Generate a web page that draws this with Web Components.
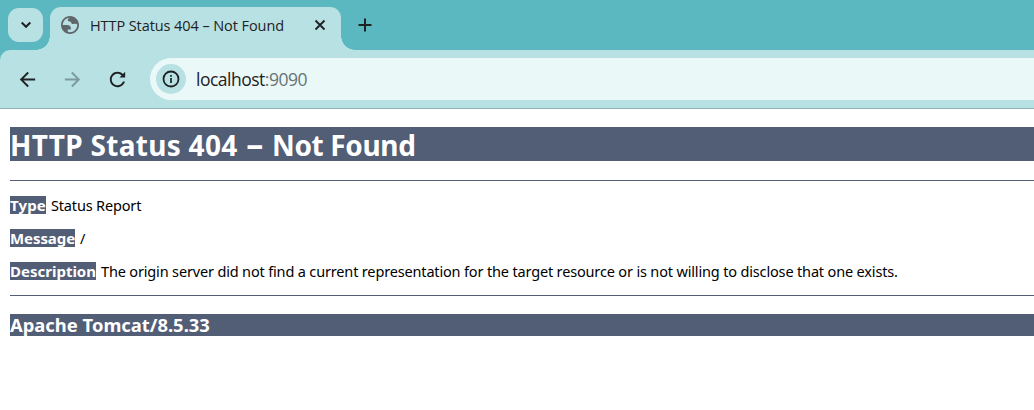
<!DOCTYPE html>
<html lang="en">
<head>
<meta charset="utf-8">
<title>HTTP Status 404 – Not Found</title>
<style>
body{margin:0;background:#fff;overflow:hidden}
</style>
</head>
<body>
<browser-window></browser-window>
<script>
const define = (name, html) => {
  const t = document.createElement('template');
  t.innerHTML = html;
  customElements.define(name, class extends HTMLElement {
    constructor() {
      super();
      this.attachShadow({mode: 'open'}).append(t.content.cloneNode(true));
    }
  });
};

define('tab-strip', `
<style>
:host{display:flex;height:50px;padding-left:8px;box-sizing:border-box;background:#5bb8c1;font-family:"Open Sans","Noto Sans",sans-serif;color:#1f2223}
svg{display:block;flex:none}
.menu{width:35px;height:34px;margin-top:8px;border-radius:11px;background:#b8e1e4;display:grid;place-items:center}
.tab{position:relative;display:flex;align-items:center;box-sizing:border-box;width:291px;height:43px;margin:7px 0 0 7px;padding:0 15px 7px 11px;border-radius:11px 11px 0 0;background:#b8e1e4}
.tab::before,.tab::after{content:"";position:absolute;bottom:0;width:14px;height:14px}
.tab::before{left:-14px;background:radial-gradient(circle at 0 0,transparent 13.5px,#b8e1e4 14px)}
.tab::after{right:-14px;background:radial-gradient(circle at 100% 0,transparent 13.5px,#b8e1e4 14px)}
.title{flex:1;margin:2px 0 0 11px;font-size:14.5px;line-height:20px;letter-spacing:-.08px;white-space:nowrap}
.plus{margin:18px 0 0 17px}
</style>
<div class="menu"><svg width="12" height="8" viewBox="0 0 12 8"><path d="M1.7 1.5 6 5.8l4.3-4.3" fill="none" stroke="#1f2223" stroke-width="2"/></svg></div>
<div class="tab">
<svg width="18" height="18" viewBox="2 2 20 20"><path fill="#5f6669" fill-rule="evenodd" d="M12 2C6.48 2 2 6.48 2 12s4.480 10 10 10 10-4.480 10-10S17.520 2 12 2zM4 12h4.400c3.400 0 4.900 1.500 4.600 4.900H9.500v2.700c.8.3 1.600.4 2.500.4 4.400 0 8-3.600 8-8v-.5c-.5-.8-1.200-1-2-1-2 0-2.500.5-3 .5-1.800 0-1.200-3-3.500-3-1.500 0-2-.5-2-2C9.500 5 10.700 4.700 12 4c-4.400 0-8 3.600-8 8z"/></svg>
<span class="title"><slot></slot></span>
<svg width="12" height="12" viewBox="0 0 12 12"><path d="m1.500 1.500 9 9m0-9-9 9" stroke="#1f2223" stroke-width="1.900"/></svg>
</div>
<svg class="plus" width="14" height="14" viewBox="0 0 14 14"><path d="M7 .5v13M.5 7h13" stroke="#1f2223" stroke-width="2"/></svg>
`);

define('address-bar', `
<style>
:host{display:flex;align-items:center;flex:1;box-sizing:border-box;height:42px;padding-left:6px;border-radius:21px 0 0 21px;background:#ebf8f8;color:#1f2223;font:17.5px/24px "Open Sans","Noto Sans",sans-serif;letter-spacing:-.5px;white-space:nowrap}
.info{width:30px;height:30px;border-radius:50%;background:#b8e1e4;display:grid;place-items:center;margin-right:10px}
svg{display:block}
.port{color:#657476}
</style>
<div class="info"><svg width="18" height="18" viewBox="0 0 18 18"><circle cx="9" cy="9" r="7.500" fill="none" stroke="#1f2223" stroke-width="1.800"/><path d="M9 8v5M9 5v1.800" stroke="#1f2223" stroke-width="1.700"/></svg></div>
<span><slot></slot></span><span class="port"><slot name="port"></slot></span>
`);

define('browser-toolbar', `
<style>
:host{display:block;background:#5bb8c1}
.bar{display:flex;align-items:center;box-sizing:border-box;height:59px;padding-left:16px;background:#b8e1e4;border-bottom:1px solid #8fb3b6;border-top-left-radius:10px}
svg{display:block;flex:none;fill:#1f2223}
.fwd{fill:#7c999c;margin-left:22px}
.reload{margin:0 21px 0 22px}
</style>
<div class="bar">
<svg width="23" height="23" viewBox="0 0 24 24"><path d="M20 11H7.830l5.590-5.590L12 4l-8 8 8 8 1.410-1.410L7.830 13H20v-2z"/></svg>
<svg class="fwd" width="23" height="23" viewBox="0 0 24 24"><path d="m12 4-1.410 1.410L16.170 11H4v2h12.170l-5.580 5.590L12 20l8-8z"/></svg>
<svg class="reload" width="23" height="23" viewBox="0 0 24 24"><path d="M17.650 6.350C16.200 4.900 14.210 4 12 4c-4.420 0-7.990 3.580-7.990 8s3.570 8 7.990 8c3.730 0 6.840-2.550 7.730-6h-2.080c-.82 2.330-3.040 4-5.650 4-3.310 0-6-2.690-6-6s2.690-6 6-6c1.660 0 3.140.69 4.220 1.780L14 10h6V4l-2.350 2.350z"/></svg>
<address-bar>localhost<span slot="port">:9090</span></address-bar>
</div>
`);

define('report-line', `
<style>
:host{display:flex;height:18px;margin-bottom:15px;font-size:14.5px;line-height:19px;letter-spacing:-.16px;white-space:nowrap}
b{background:#525d76;color:#fff;margin-right:5px;flex:none;height:18px;font-size:15px;letter-spacing:var(--label-spacing,0)}
</style>
<b><slot name="label"></slot></b><span><slot></slot></span>
`);

define('error-report', `
<style>
:host{display:block;padding:18px 0 0 10px;font-family:"Noto Sans",Tahoma,sans-serif;color:#000;background:#fff}
h1,h3{margin:0;background:#525d76;color:#fff;white-space:nowrap}
h1{font-size:28px;line-height:37px;height:34px;letter-spacing:.3px}
.dash{font-size:34px;line-height:1px;margin:0 1px}
.tail{letter-spacing:-.35px}
h3{font-size:18.400px;line-height:22px;height:22px}
.line{height:1px;background:#525d76}
.first{margin:19px 0 15px}
.last{margin:0 0 18px}
</style>
<h1>HTTP Status 404 <span class="dash">–</span> <span class="tail">Not Found</span></h1>
<div class="line first"></div>
<report-line style="--label-spacing:.15px"><span slot="label">Type</span>Status Report</report-line>
<report-line style="--label-spacing:-.08px"><span slot="label">Message</span>/</report-line>
<report-line><span slot="label">Description</span>The origin server did not find a current representation for the target resource or is not willing to disclose that one exists.</report-line>
<div class="line last"></div>
<h3>Apache Tomcat/8.5.33</h3>
`);

define('browser-window', `
<style>:host{display:block;height:410px;background:#fff;overflow:hidden}</style>
<tab-strip>HTTP Status 404 – Not Found</tab-strip>
<browser-toolbar></browser-toolbar>
<error-report></error-report>
`);
</script>
</body>
</html>
